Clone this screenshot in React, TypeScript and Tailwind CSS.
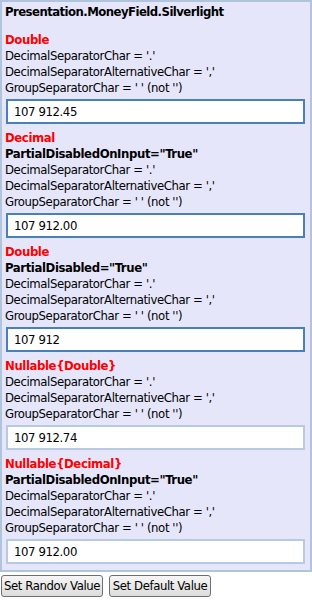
import React from "react";

type Section = {
  title: string;
  extra?: string;
  value: string;
  dark: boolean;
};

const sections: Section[] = [
  { title: "Double", value: "107 912.45", dark: true },
  { title: "Decimal", extra: 'PartialDisabledOnInput="True"', value: "107 912.00", dark: true },
  { title: "Double", extra: 'PartialDisabled="True"', value: "107 912", dark: true },
  { title: "Nullable{Double}", value: "107 912.74", dark: false },
  { title: "Nullable{Decimal}", extra: 'PartialDisabledOnInput="True"', value: "107 912.00", dark: false },
];

export default function App() {
  return (
    <div
      className="w-[312px] h-[600px] bg-white text-[13px] leading-[16px] tracking-[-0.4px] text-black"
      style={{ fontFamily: '"DejaVu Sans Condensed", "DejaVu Sans", sans-serif' }}
    >
      <div className="border-2 border-[#b0c4de] bg-[#e6e6fa] pl-[3px] pr-[3px] pt-[2px]">
        <div className="font-bold tracking-[-0.55px] mb-[12px]">Presentation.MoneyField.Silverlight</div>
        {sections.map((s, i) => (
          <div key={i}>
            <div className="font-bold text-[#ff0000]">{s.title}</div>
            {s.extra && <div className="font-bold">{s.extra}</div>}
            <div>DecimalSeparatorChar = '.'</div>
            <div>DecimalSeparatorAlternativeChar = ','</div>
            <div>GroupSeparatorChar = ' ' (not '')</div>
            <div
              className={
                "mt-[3px] mb-[6px] ml-[1px] mr-[2px] h-[25px] bg-white border-2 flex items-center pl-[6px] " +
                (s.dark ? "border-[#4a80b8]" : "border-[#b8c9e2]")
              }
            >
              {s.value}
            </div>
          </div>
        ))}
      </div>
      <div className="flex gap-[6px] mt-[3px] ml-[1px]">
        <button className="h-[22px] w-[102px] whitespace-nowrap rounded-[3px] border border-[#707070] bg-gradient-to-b from-[#f6f6f6] to-[#dcdcdc] text-[13px] leading-[16px] px-0 text-center">
          Set Randov Value
        </button>
        <button className="h-[22px] w-[102px] whitespace-nowrap rounded-[3px] border border-[#707070] bg-gradient-to-b from-[#f6f6f6] to-[#dcdcdc] text-[13px] leading-[16px] px-0 text-center">
          Set Default Value
        </button>
      </div>
    </div>
  );
}
